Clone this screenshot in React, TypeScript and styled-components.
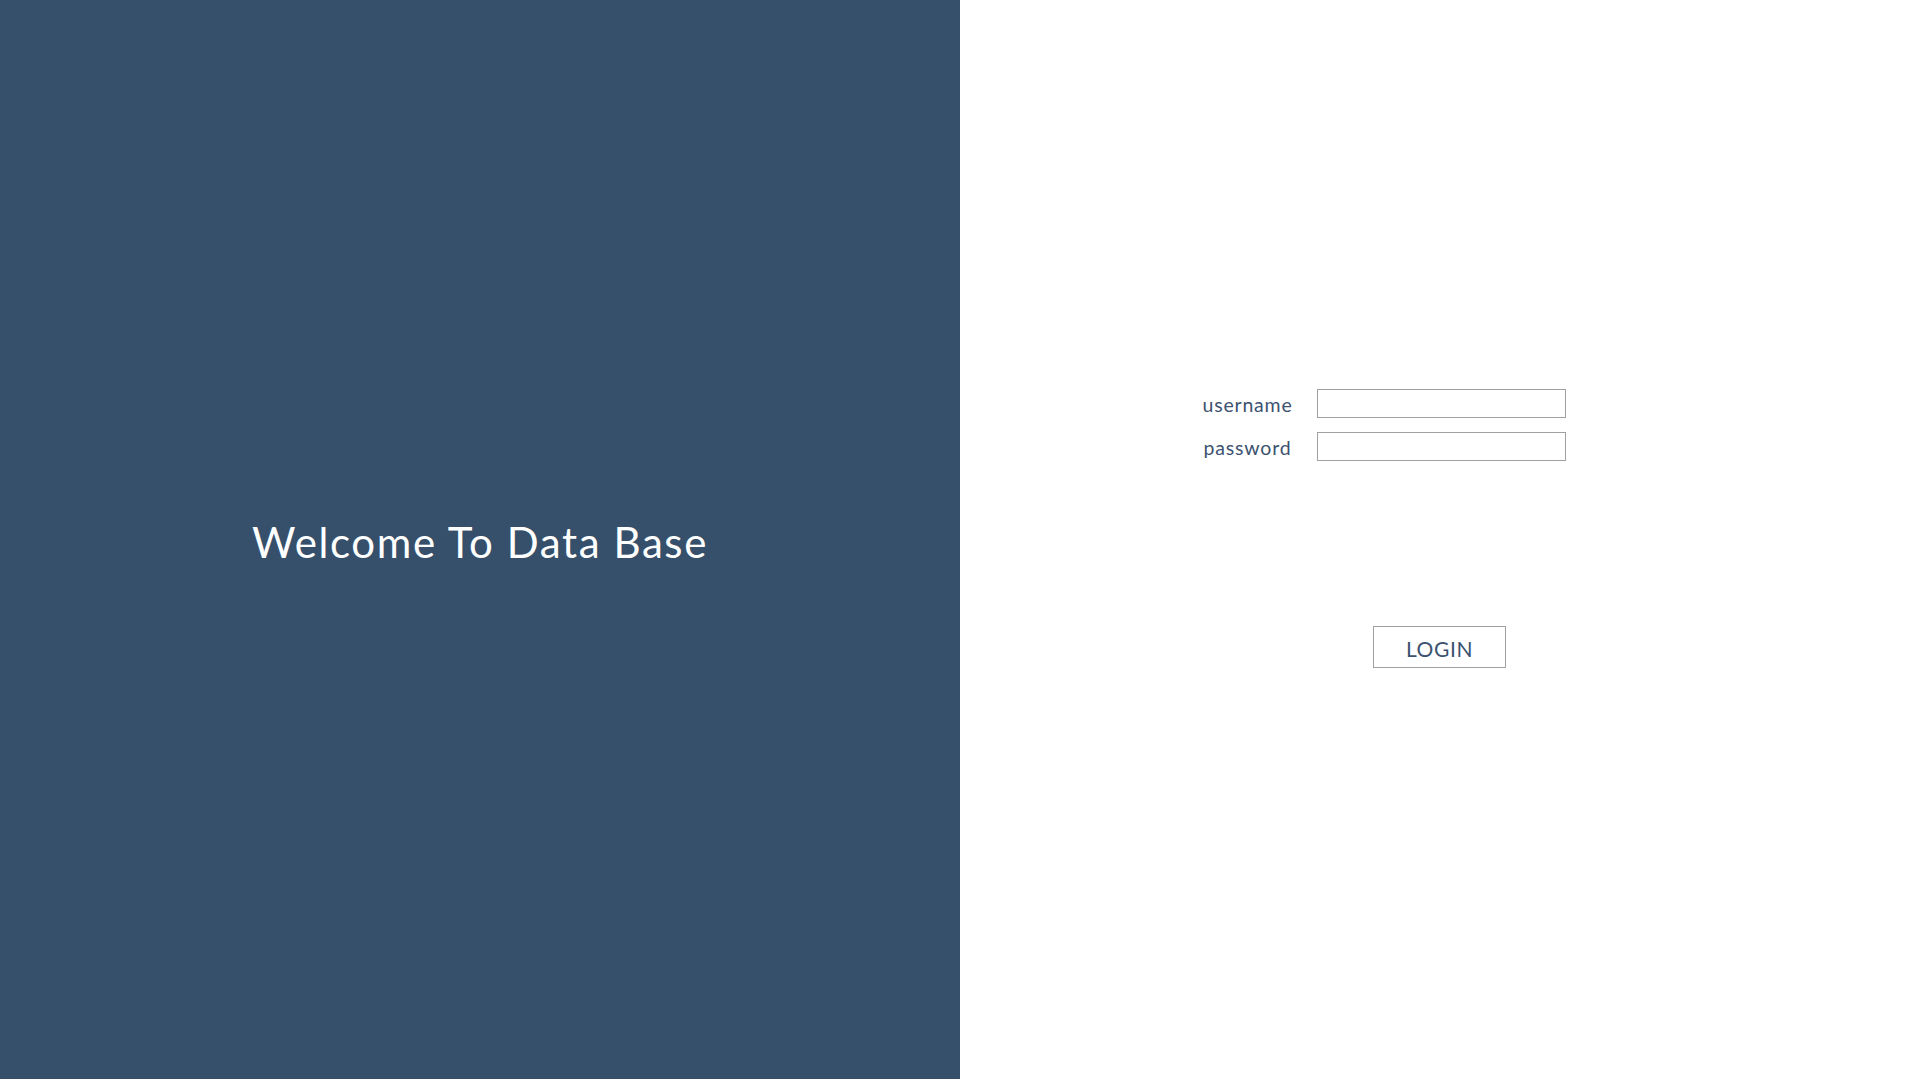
import React from "react";
import styled, { createGlobalStyle } from "styled-components";

const Global = createGlobalStyle`
  html, body { margin: 0; padding: 0; height: 100%; }
  body { font-family: "Lato", "Noto Sans", sans-serif; }
  #root { height: 100%; }
`;

const Page = styled.div`
  display: flex;
  width: 100vw;
  height: 100vh;
  overflow: hidden;
`;

const LeftPanel = styled.section`
  width: 960px;
  flex: none;
  background: #36506b;
  display: flex;
  align-items: center;
  justify-content: center;
`;

const Title = styled.h1`
  margin: 0;
  color: #ffffff;
  font-family: "Lato", sans-serif;
  font-weight: 400;
  font-size: 42px;
  letter-spacing: 1.6px;
  line-height: 1;
  padding-top: 4px;
`;

const RightPanel = styled.section`
  flex: 1;
  background: #ffffff;
  display: flex;
  flex-direction: column;
  padding-top: 389px;
`;

const Form = styled.div`
  display: grid;
  grid-template-columns: 115px 249px;
  column-gap: 12px;
  row-gap: 14px;
  margin-left: 230px;
`;

const Label = styled.label`
  display: flex;
  align-items: center;
  justify-content: center;
  height: 29px;
  color: #3c5270;
  font-size: 19.5px;
  letter-spacing: 0.8px;
  padding-top: 2px;
  box-sizing: border-box;
`;

const Input = styled.input`
  box-sizing: border-box;
  width: 249px;
  height: 29px;
  border: 1px solid #a0a0a0;
  background: #fff;
  outline: none;
  padding: 2px 6px;
  font-size: 16px;
`;

const ButtonRow = styled.div`
  display: flex;
  justify-content: center;
  margin-top: 165px;
`;

const LoginButton = styled.button`
  box-sizing: border-box;
  width: 133px;
  height: 42px;
  background: #fff;
  border: 1px solid #a0a0a0;
  color: #3c5270;
  font-family: "Lato", sans-serif;
  font-size: 21px;
  letter-spacing: 0.6px;
  cursor: pointer;
  padding: 2px 0 0;
`;

export default function App() {
  return (
    <>
      <Global />
      <Page>
        <LeftPanel>
          <Title>Welcome To Data Base</Title>
        </LeftPanel>
        <RightPanel>
          <Form>
            <Label htmlFor="u">username</Label>
            <Input id="u" type="text" />
            <Label htmlFor="p">password</Label>
            <Input id="p" type="password" />
          </Form>
          <ButtonRow>
            <LoginButton>LOGIN</LoginButton>
          </ButtonRow>
        </RightPanel>
      </Page>
    </>
  );
}
